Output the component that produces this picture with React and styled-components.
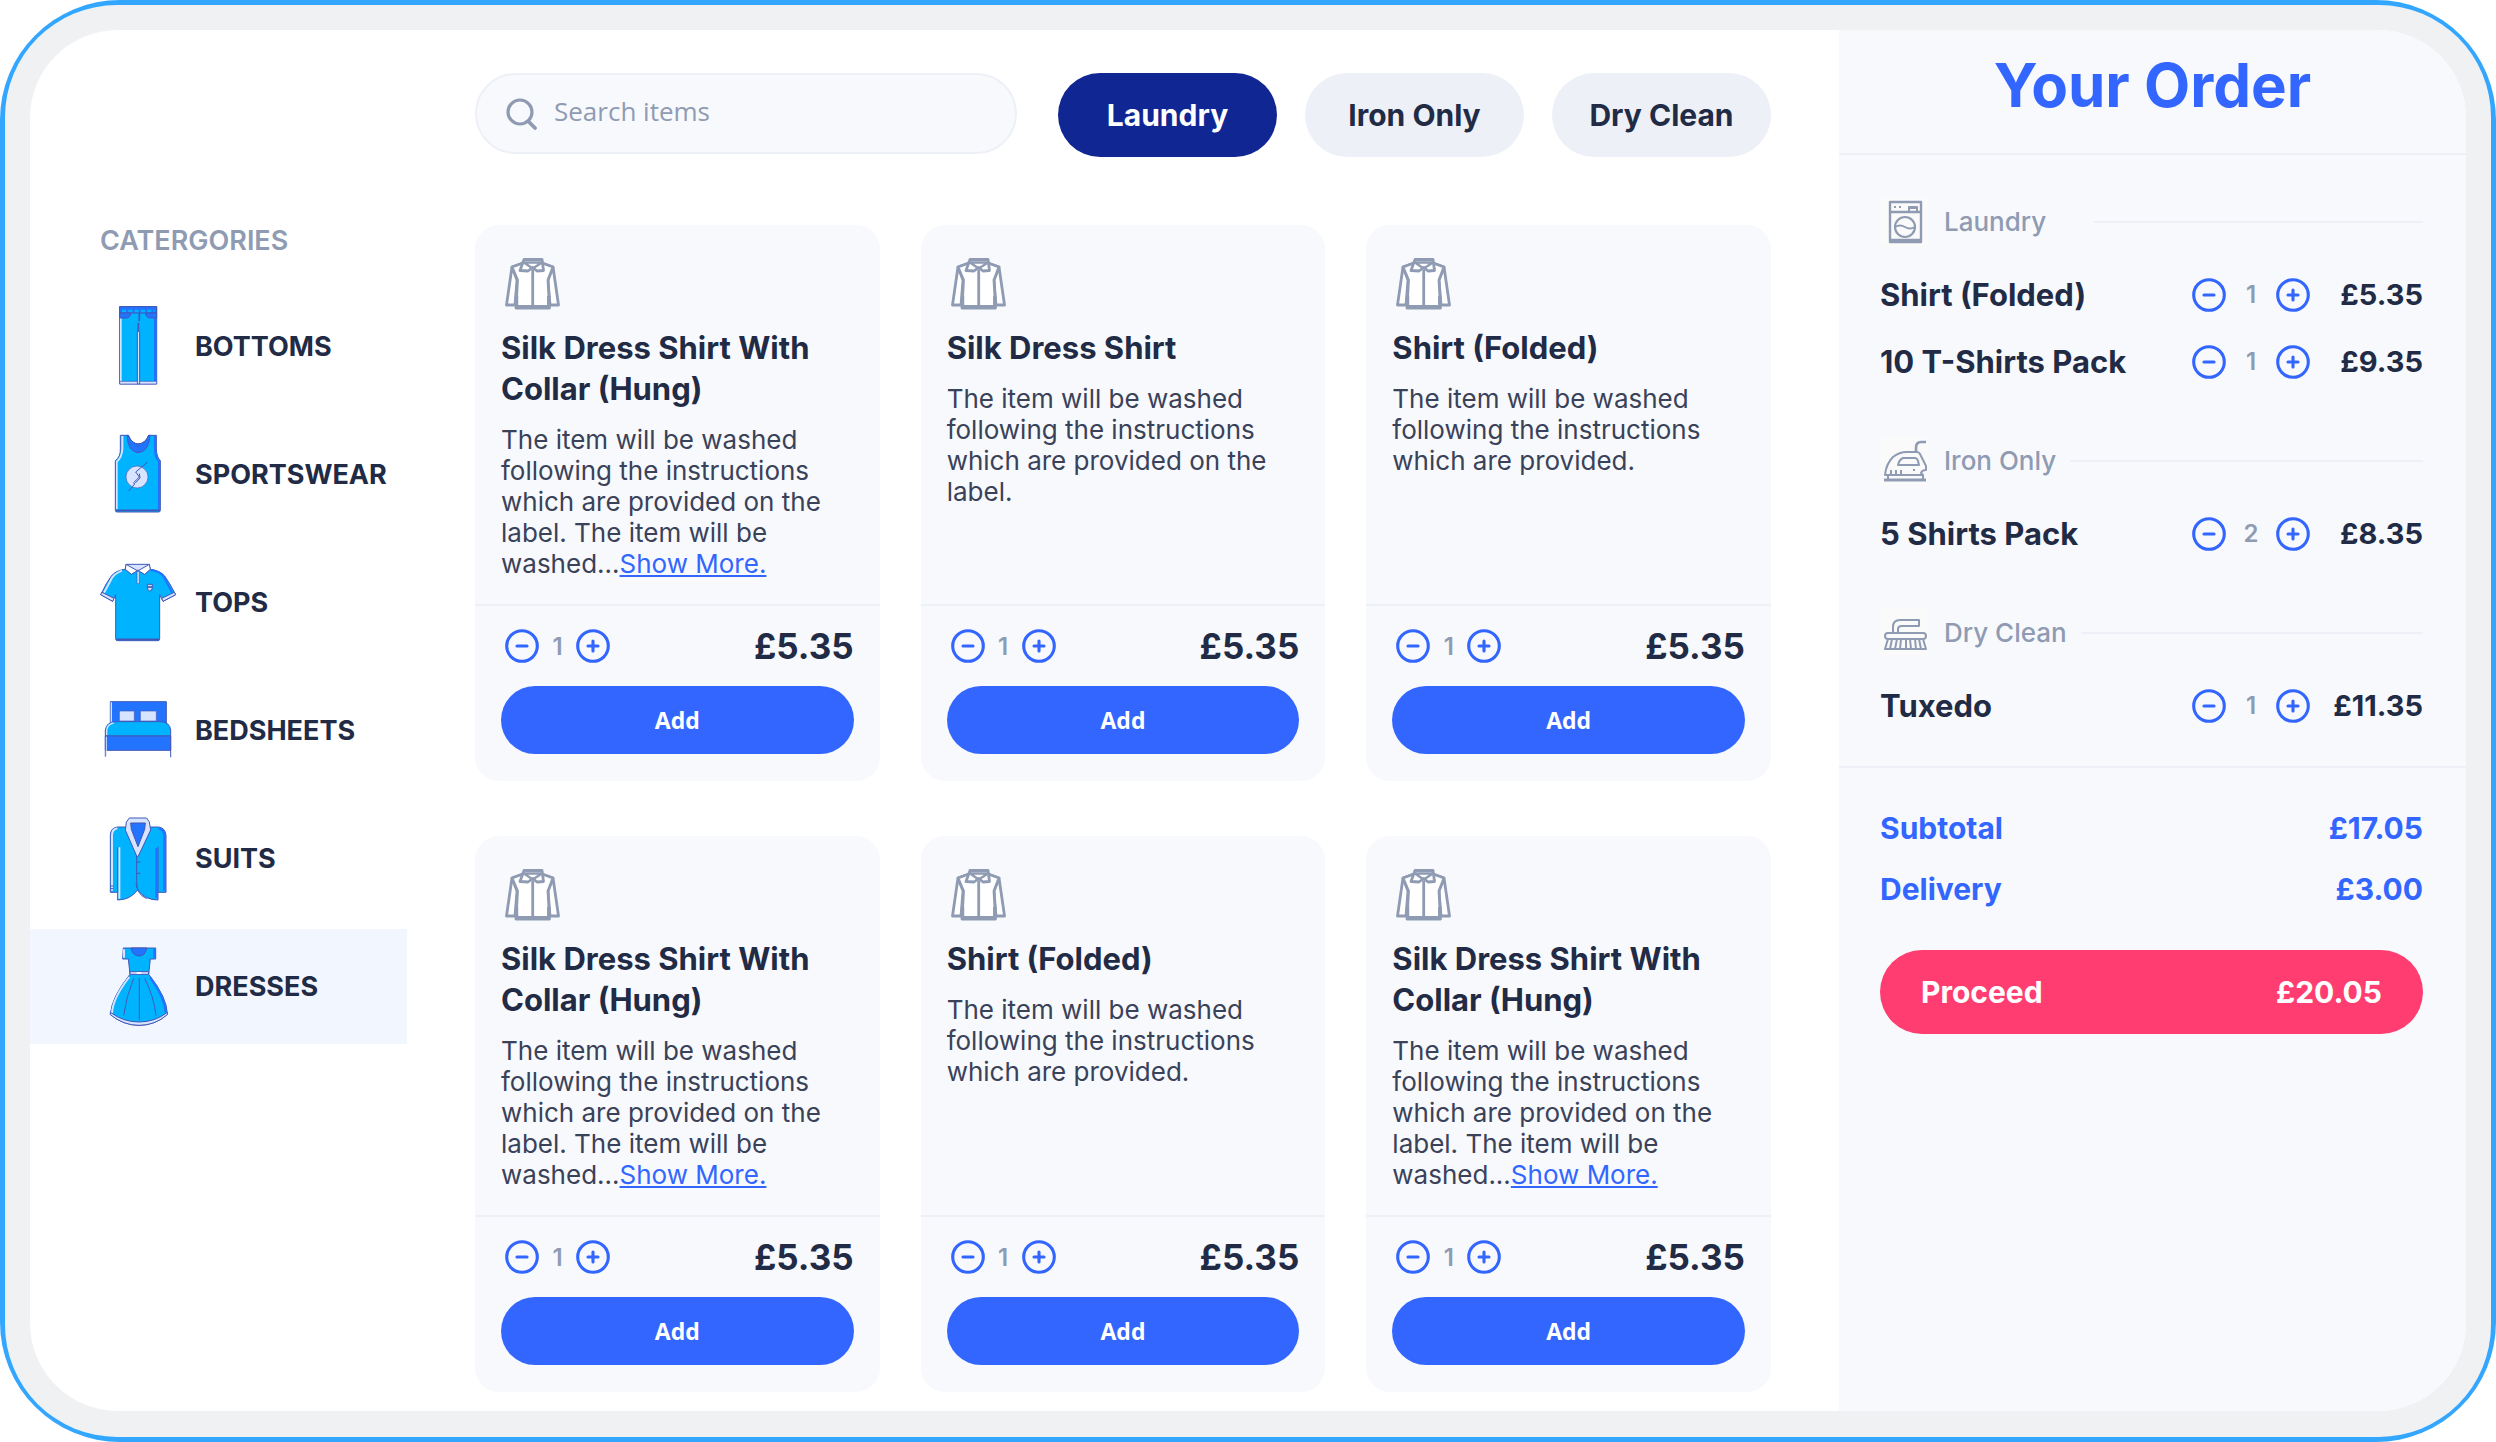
// IMPORTS
  // - Modules
    import { useState } from 'react'
    import styled, { createGlobalStyle } from 'styled-components'
//


// BRANDING
  const colors = {
    frame: '#33a6ff',
    bezel: '#f0f1f3',
    light: '#ffffff',
    panel: '#f7f9fc',
    line: '#edf1f7',
    hint: '#8f9bb3',
    dark: '#222b45',
    text: '#3a4259',
    primary: '#3366ff',
    primaryDark: '#102693',
    pill: '#edf0f7',
    active: '#f2f6ff',
    danger: '#ff3d71',
  }

  const fonts = {
    main: `Inter, "Liberation Sans", sans-serif`,
    controls: `"Open Sans", "Noto Sans", sans-serif`,
  }
//


// DATA
  const categories = ['Bottoms', 'Sportswear', 'Tops', 'Bedsheets', 'Suits', 'Dresses']

  const services = ['Laundry', 'Iron Only', 'Dry Clean']

  const longText = 'The item will be washed following the instructions which are provided on the label. The item will be washed...'
  const mediumText = 'The item will be washed following the instructions which are provided on the label.'
  const shortText = 'The item will be washed following the instructions which are provided.'

  const products = [
    { id: 1, name: 'Silk Dress Shirt With Collar (Hung)', text: longText, more: true, price: '£5.35' },
    { id: 2, name: 'Silk Dress Shirt', text: mediumText, price: '£5.35' },
    { id: 3, name: 'Shirt (Folded)', text: shortText, price: '£5.35' },
    { id: 4, name: 'Silk Dress Shirt With Collar (Hung)', text: longText, more: true, price: '£5.35' },
    { id: 5, name: 'Shirt (Folded)', text: shortText, price: '£5.35' },
    { id: 6, name: 'Silk Dress Shirt With Collar (Hung)', text: longText, more: true, price: '£5.35' },
  ]

  const order = [
    { service: 'Laundry', lineGap: '48px', items: [
      { name: 'Shirt (Folded)', qty: 1, price: '£5.35' },
      { name: '10 T-Shirts Pack', qty: 1, price: '£9.35' },
    ]},
    { service: 'Iron Only', items: [
      { name: '5 Shirts Pack', qty: 2, price: '£8.35' },
    ]},
    { service: 'Dry Clean', items: [
      { name: 'Tuxedo', qty: 1, price: '£11.35' },
    ]},
  ]
//


// STYLES
  const GlobalStyle = createGlobalStyle`
    *, *::before, *::after{
      box-sizing: border-box;
    }

    body{
      margin: 0;
      background: ${colors.light};
      color: ${colors.dark};
      font-family: ${fonts.main};
    }

    h1, h2, h3, p, ul{
      margin: 0;
      padding: 0;
    }

    ul{
      list-style: none;
    }

    svg{
      display: block;
      flex-shrink: 0;
    }

    button{
      padding: 0;
      border: none;
      font-family: inherit;
      cursor: pointer;
    }
  `

  // - Frame
  const Frame = styled.div`
    display: flex;
    min-height: 100vh;
    padding: 5px;
    background: ${colors.frame};
    border-radius: 120px;
  `
  const Bezel = styled.div`
    display: flex;
    flex: 1;
    min-width: 0;
    padding: 25px 25px 26px;
    background: ${colors.bezel};
    border-radius: 112px;
  `
  const Screen = styled.div`
    display: grid;
    grid-template-columns: 377px minmax(0, 1fr) 627px;
    flex: 1;
    min-width: 0;
    overflow: hidden;
    background: ${colors.light};
    border-radius: 88px;
  `

  // - Sidebar
  const Sidebar = styled.nav`
    padding-top: 196px;
  `
  const SidebarTitle = styled.h2`
    margin-bottom: 33px;
    padding-left: 70px;
    color: ${colors.hint};
    font-size: 27px;
    font-weight: 600;
    line-height: 30px;
    text-transform: uppercase;
  `
  const CategoryList = styled.ul`
    display: flex;
    flex-direction: column;
    gap: 13px;
  `
  const CategoryButton = styled.button`
    display: flex;
    align-items: center;
    gap: 19px;
    width: 100%;
    height: 115px;
    padding-left: 70px;
    background: ${props => props.$active ? colors.active : 'transparent'};
    color: ${colors.dark};
    font-size: 27px;
    font-weight: 700;
    text-transform: uppercase;
  `

  // - Catalogue
  const Catalogue = styled.main`
    padding: 43px 68px 18px;
  `
  const Toolbar = styled.div`
    display: flex;
    align-items: flex-start;
    gap: 41px;
    margin-bottom: 68px;
  `
  const SearchBox = styled.label`
    display: flex;
    flex: 1;
    align-items: center;
    gap: 16px;
    min-width: 0;
    height: 81px;
    padding: 0 29px;
    background: ${colors.panel};
    border: 2px solid ${colors.line};
    border-radius: 41px;
  `
  const SearchInput = styled.input`
    flex: 1;
    min-width: 0;
    padding: 0 0 6px;
    background: transparent;
    border: none;
    outline: none;
    color: ${colors.dark};
    font-family: ${fonts.controls};
    font-size: 26px;

    &::placeholder{
      color: ${colors.hint};
      opacity: 1;
    }
  `
  const Pills = styled.div`
    display: flex;
    gap: 28px;
  `
  const Pill = styled.button`
    width: 219px;
    height: 84px;
    background: ${props => props.$active ? colors.primaryDark : colors.pill};
    border-radius: 42px;
    color: ${props => props.$active ? colors.light : colors.dark};
    font-size: 30px;
    font-weight: 700;
  `
  const ProductGrid = styled.div`
    display: grid;
    grid-template-columns: repeat(3, minmax(0, 1fr));
    gap: 55px 41px;
  `
  const Card = styled.article`
    display: flex;
    flex-direction: column;
    background: ${colors.panel};
    border-radius: 24px;
  `
  const CardBody = styled.div`
    flex: 1;
    padding: 33px 26px 25px;
  `
  const CardIcon = styled.div`
    padding-left: 4px;
  `
  const CardTitle = styled.h3`
    margin: 17px 0 15px;
    font-size: 31px;
    font-weight: 700;
    line-height: 41px;
  `
  const CardText = styled.p`
    color: ${colors.text};
    font-size: 26px;
    line-height: 31px;

    a{
      color: ${colors.primary};
      text-decoration: underline;
    }
  `
  const CardFooter = styled.div`
    padding: 23px 26px 27px;
    border-top: 2px solid ${colors.line};
  `
  const CardRow = styled.div`
    display: flex;
    align-items: center;
    justify-content: space-between;
    height: 34px;
    margin-bottom: 23px;
    padding-left: 4px;
  `
  const CardPrice = styled.span`
    font-size: 35px;
    font-weight: 700;
  `
  const AddButton = styled.button`
    width: 100%;
    height: 68px;
    background: ${colors.primary};
    border-radius: 34px;
    color: ${colors.light};
    font-family: ${fonts.controls};
    font-size: 23px;
    font-weight: 700;
  `

  // - Stepper
  const StepperBox = styled.div`
    display: flex;
    align-items: center;
  `
  const RoundButton = styled.button`
    width: 34px;
    height: 34px;
    background: transparent;
    color: ${colors.primary};
  `
  const Quantity = styled.output`
    width: ${props => props.$wide ? '50px' : '37px'};
    color: ${colors.hint};
    font-size: 24px;
    font-weight: 600;
    text-align: center;
  `

  // - Order
  const OrderPanel = styled.aside`
    background: ${colors.panel};
  `
  const OrderHeader = styled.header`
    padding: 17px 0 30px;
    border-bottom: 2px solid ${colors.line};
  `
  const OrderTitle = styled.h1`
    color: ${colors.primary};
    font-size: 60px;
    font-weight: 700;
    line-height: 76px;
    text-align: center;
  `
  const OrderGroups = styled.div`
    display: flex;
    flex-direction: column;
    gap: 42px;
    padding: 43px 43px 27px 41px;
    border-bottom: 2px solid ${colors.line};
  `
  const GroupHeader = styled.div`
    display: flex;
    align-items: center;
    margin-bottom: 15px;
  `
  const GroupName = styled.h2`
    margin: 0 ${props => props.$gap || '14px'} 0 16px;
    color: ${colors.hint};
    font-size: 26px;
    font-weight: 500;
    line-height: 30px;
  `
  const GroupLine = styled.div`
    flex: 1;
    height: 2px;
    background: ${colors.line};
  `
  const OrderRow = styled.li`
    display: flex;
    align-items: center;
    height: 67px;
  `
  const OrderName = styled.span`
    flex: 1;
    font-size: 31px;
    font-weight: 700;
  `
  const OrderPrice = styled.span`
    width: 113px;
    font-size: 29px;
    font-weight: 700;
    text-align: right;
  `
  const Totals = styled.div`
    padding: 30px 43px 0 41px;
  `
  const TotalRow = styled.div`
    display: flex;
    justify-content: space-between;
    color: ${colors.primary};
    font-size: 30px;
    font-weight: 700;
    line-height: 61px;
  `
  const ProceedButton = styled.button`
    display: flex;
    align-items: center;
    justify-content: space-between;
    width: 100%;
    height: 84px;
    margin-top: 30px;
    padding: 0 41px;
    background: ${colors.danger};
    border-radius: 42px;
    color: ${colors.light};
    font-size: 30px;
    font-weight: 700;
  `
//


// ICONS
  const sky = '#00b3ff'
  const royal = '#2274ff'
  const edge = '#4257b8'
  const pale = '#d6e4ff'

  // - Categories
  const categoryDrawings = {
    Bottoms: (
      <svg width="76" height="86" viewBox="62 70 228 258" fill="none" stroke={edge} strokeWidth="3">
        <path d="M121 78H232V310H121Z" fill={sky} />
        <path d="M224 112H232V302H224Z" fill={royal} stroke="none" />
        <path d="M122 112H127V302H122Z" fill={pale} stroke="none" />
        <path d="M121 78H232V97H121Z" fill={royal} />
        <path d="M128 91H226" stroke={sky} strokeWidth="7" strokeDasharray="12 7" />
        <path d="M121 97H154Q154 112 140 112H121ZM232 97H198Q200 112 214 112H232Z" fill={royal} />
        <path d="M180 97V122M177 126V152" strokeWidth="5" strokeDasharray="24 5" />
        <path d="M174 152H181V310H174Z" fill={pale} />
        <path d="M121 302H174V310H121ZM181 302H232V310H181Z" fill={pale} strokeWidth="2" />
      </svg>
    ),
    Sportswear: (
      <svg width="76" height="86" viewBox="60 454 228 258" fill="none" stroke={edge} strokeWidth="3" strokeLinejoin="round">
        <path d="M121 464H145Q155 489 174 490Q196 489 206 464H229V505Q230 530 241 540V689Q241 694 236 694H111Q106 694 106 689V540Q122 528 121 505Z" fill={sky} />
        <path d="M124 466H130V506Q128 532 113 544V686H108V541Q123 530 124 505Z" fill={pale} stroke="none" />
        <path d="M222 466H228V505Q229 531 240 542V688H234V544Q222 530 222 508Z" fill={royal} stroke="none" />
        <path d="M141 464H145Q155 489 174 490Q196 489 206 464H210Q206 515 174 516Q144 514 141 464Z" fill={royal} />
        <path d="M168 495Q174 500 180 495" strokeWidth="2" />
        <circle cx="171" cy="589" r="33" fill={pale} strokeWidth="2" />
        <path d="M203 544L167 574L178 589L161 606L164 610L146 631" />
        <path d="M178 579L180 592L166 607" />
        <path d="M108 689H239" strokeWidth="5" />
      </svg>
    ),
    Tops: (
      <svg width="76" height="86" viewBox="60 838 228 258" fill="none" stroke={edge} strokeWidth="3" strokeLinejoin="round">
        <path d="M138 865Q106 870 94 886Q80 905 62 942L98 962L107 942V1074Q107 1080 112 1080H234Q239 1080 239 1074V942L249 962L287 942Q268 905 254 886Q240 870 208 865Z" fill={sky} />
        <path d="M126 870Q106 878 97 890L72 936" stroke={pale} strokeWidth="6" />
        <path d="M212 868Q242 872 252 889L276 936" stroke={royal} strokeWidth="6" />
        <path d="M62 942L66 935L102 953L98 962ZM287 942L283 935L245 953L249 962Z" fill={pale} />
        <path d="M138 851H208L210 866L194 880L174 868L154 880L136 866Z" fill={pale} />
        <path d="M138 851L172 870L154 881L136 866ZM208 851L175 870L194 881L211 866Z" fill="#ffffff" />
        <path d="M171 872H178V909H171Z" fill={pale} strokeWidth="2" />
        <path d="M202 911H217V922Q216 930 209 931Q203 930 202 922Z" fill={pale} />
        <path d="M203 919H216" strokeWidth="5" />
        <path d="M109 1076H237" strokeWidth="5" />
      </svg>
    ),
    Bedsheets: (
      <svg width="76" height="86" viewBox="59 82 228 258" fill="none" stroke={edge} strokeWidth="3" strokeLinejoin="round">
        <path d="M90 123H258V200H90Z" fill={royal} />
        <path d="M93 125V190" stroke={pale} strokeWidth="4" />
        <path d="M117 151H162V181H117ZM180 151H228V181H180Z" fill={pale} strokeWidth="2" />
        <path d="M75 226V208Q79 184 104 183H242Q268 184 271 208V226Z" fill={sky} />
        <path d="M79 224V208Q82 190 100 187" stroke={pale} strokeWidth="4" />
        <path d="M75 226H271V269H75Z" fill={royal} />
        <path d="M75 226V288M271 226V290" />
        <path d="M78 228V286" stroke={pale} strokeWidth="3" />
      </svg>
    ),
    Suits: (
      <svg width="76" height="86" viewBox="60 466 228 258" fill="none" stroke={edge} strokeWidth="3" strokeLinejoin="round">
        <path d="M136 499H112Q91 502 91 524V695H113V718Q150 718 173 688Q196 718 234 718V695H258V524Q256 502 236 499H212Z" fill={sky} />
        <path d="M112 503Q96 506 96 524V690M118 560V714" stroke={pale} strokeWidth="6" />
        <path d="M236 503Q252 506 253 524V690M229 562V712" stroke={royal} strokeWidth="7" />
        <path d="M113 695V560M234 695V558M91 676H100M91 684H100" />
        <path d="M148 486H200L176 560H171Z" fill={royal} />
        <path d="M148 472H200L208 484L212 508L174 588L170 586L136 508L139 484ZM152 487L154 506L174 558L194 506L196 487Z" fill={pale} fillRule="evenodd" />
        <path d="M170 586V662Q168 700 200 714M173 688L168 668M170 604H181M170 638H181" />
      </svg>
    ),
    Dresses: (
      <svg width="76" height="86" viewBox="60 851 228 258" fill="none" stroke={edge} strokeWidth="3" strokeLinejoin="round">
        <path d="M130 863H227V896H211L206 942Q262 1012 262 1062Q225 1095 177 1095Q130 1095 91 1062Q95 1010 150 942L145 896H128Z" fill={sky} />
        <path d="M148 950Q99 1012 96 1058M132 867V892" stroke={pale} strokeWidth="6" />
        <path d="M211 952Q254 1010 257 1056M223 867V892" stroke={royal} strokeWidth="7" />
        <path d="M153 863H200Q196 887 177 887Q158 887 153 863Z" fill={royal} />
        <path d="M150 934H206V942H150Z" fill={pale} />
        <path d="M170 938H184" stroke="#ffffff" strokeWidth="5" />
        <path d="M91 1056Q130 1085 177 1085Q225 1085 262 1056V1063Q225 1095 177 1095Q130 1095 91 1063Z" fill={pale} />
        <path d="M161 954Q138 1010 131 1066M178 952V1080M194 954Q222 1010 228 1066" />
      </svg>
    ),
  }

  // - Services
  const serviceDrawings = {
    'Laundry': (
      <>
        <path d="M10 4H41V44H10Z" strokeWidth="2.4" />
        <path d="M10 14H41M10 42H41" strokeWidth="2.4" />
        <path d="M14 9H16M19 9H21" />
        <path d="M29 13V9H37V13M29 10H37" />
        <circle cx="25" cy="29" r="10" strokeWidth="2.2" />
        <path d="M15 29Q20 26 25 29T35 29" />
      </>
    ),
    'Iron Only': (
      <>
        <path d="M46 5H41Q36 5 36 11V15" strokeWidth="2.6" />
        <path d="M5 38Q6 27 13 20Q19 15 27 15H37Q39 15 40 17L46 29V33Q42 33 41 36L43 38Z" />
        <path d="M18 28Q19 23 23 21H35Q37 21 38 24L39 28Z" />
        <path d="M11 33V37M16 33V37M21 33V37" strokeWidth="2" />
        <path d="M34 32V34" />
        <path d="M8 38V43M43 38V43" />
        <path d="M4 43H46" strokeWidth="3" />
      </>
    ),
    'Dry Clean': (
      <>
        <path d="M13 24V18Q13 11 20 11H39V17H22Q18 17 18 20V24" />
        <rect x="5" y="24" width="41" height="6" rx="3" />
        <path d="M8 30L5 40H46L43 30" />
        <path d="M12 30L10 40M17 30L15 40M21 30L20 40M26 30V40M30 30L31 40M35 30L36 40M39 30L41 40" />
      </>
    ),
  }

  const ServiceSvg = styled.svg`
    background: #fafafa;
    color: ${colors.hint};
  `

  function ServiceIcon({ name }) {
    return (
      <ServiceSvg width="48" height="48" viewBox="0 0 48 48" fill="none" stroke="currentColor" strokeWidth="2" strokeLinejoin="round" aria-hidden="true">
        {serviceDrawings[name]}
      </ServiceSvg>
    )
  }

  // - Generic
  function ShirtIcon() {
    return (
      <svg width="55" height="52" viewBox="0 0 55 52" fill="none" stroke={colors.hint} strokeWidth="2.8" strokeLinejoin="round" aria-hidden="true">
        <path d="M18 5L7 9L1.500 47H10L12 22L7 9" fill="#ffffff" />
        <path d="M37 5L48 9L53.500 47H45L43 22L48 9" fill="#ffffff" />
        <path d="M18 5L7 9L12.500 22L11 50H44.500L43 22L48 9L37 5Z" fill="#ffffff" />
        <path d="M11 49H44.500" strokeWidth="4" />
        <path d="M27.700 12V49" />
        <path d="M11.500 38V48M43.800 38V48" strokeWidth="3.5" />
        <path d="M19 1.500H37L38.500 12.500L32 13L27.700 9.500L23 13L15 12.500Z" fill="#ffffff" />
        <path d="M19 4.500H37M19 4.500L27.700 10.500L37 4.500" strokeWidth="2.4" />
      </svg>
    )
  }

  function SearchIcon() {
    return (
      <svg width="32" height="32" viewBox="0 0 32 32" fill="none" stroke={colors.hint} strokeWidth="3.2" strokeLinecap="round" aria-hidden="true">
        <circle cx="14" cy="14" r="12" />
        <path d="M22.500 23.500L29 30" strokeWidth="3.8" />
      </svg>
    )
  }

  function RoundIcon({ plus }) {
    return (
      <svg width="34" height="34" viewBox="0 0 34 34" fill="none" stroke="currentColor" strokeWidth="3.1" strokeLinecap="round" aria-hidden="true">
        <circle cx="17" cy="17" r="15.300" />
        <path d={plus ? 'M12 17H22M17 12V22' : 'M12 17H22'} />
      </svg>
    )
  }
//


// COMPONENTS
function Stepper({ initial, label, wide }) {
  const [qty, setQty] = useState(initial)

  return (
    <StepperBox>
      <RoundButton type="button" aria-label={`Remove one ${label}`} onClick={() => setQty(Math.max(0, qty - 1))}>
        <RoundIcon />
      </RoundButton>
      <Quantity $wide={wide}>{qty}</Quantity>
      <RoundButton type="button" aria-label={`Add one ${label}`} onClick={() => setQty(qty + 1)}>
        <RoundIcon plus />
      </RoundButton>
    </StepperBox>
  )
}

function ProductCard({ product }) {
  return (
    <Card>
      <CardBody>
        <CardIcon><ShirtIcon /></CardIcon>
        <CardTitle>{product.name}</CardTitle>
        <CardText>
          {product.text}
          {product.more && <a href="#more">Show More.</a>}
        </CardText>
      </CardBody>

      <CardFooter>
        <CardRow>
          <Stepper initial={1} label={product.name} />
          <CardPrice>{product.price}</CardPrice>
        </CardRow>
        <AddButton type="button">Add</AddButton>
      </CardFooter>
    </Card>
  )
}

function Order() {
  return (
    <OrderPanel>
      <OrderHeader>
        <OrderTitle>Your Order</OrderTitle>
      </OrderHeader>

      <OrderGroups>
        {order.map(group => (
          <section key={group.service}>
            <GroupHeader>
              <ServiceIcon name={group.service} />
              <GroupName $gap={group.lineGap}>{group.service}</GroupName>
              <GroupLine />
            </GroupHeader>
            <ul>
              {group.items.map(item => (
                <OrderRow key={item.name}>
                  <OrderName>{item.name}</OrderName>
                  <Stepper initial={item.qty} label={item.name} wide />
                  <OrderPrice>{item.price}</OrderPrice>
                </OrderRow>
              ))}
            </ul>
          </section>
        ))}
      </OrderGroups>

      <Totals>
        <TotalRow><span>Subtotal</span><span>£17.05</span></TotalRow>
        <TotalRow><span>Delivery</span><span>£3.00</span></TotalRow>
        <ProceedButton type="button">
          <span>Proceed</span>
          <span>£20.05</span>
        </ProceedButton>
      </Totals>
    </OrderPanel>
  )
}
//


// MAIN COMPONENT
export default function App() {
  const [category, setCategory] = useState('Dresses')
  const [service, setService] = useState('Laundry')

  return (
    <>
      <GlobalStyle />

      <Frame>
        <Bezel>
          <Screen>
            <Sidebar>
              <SidebarTitle>Catergories</SidebarTitle>
              <CategoryList>
                {categories.map(name => (
                  <li key={name}>
                    <CategoryButton type="button" $active={name === category} onClick={() => setCategory(name)}>
                      {categoryDrawings[name]}
                      {name}
                    </CategoryButton>
                  </li>
                ))}
              </CategoryList>
            </Sidebar>

            <Catalogue>
              <Toolbar>
                <SearchBox>
                  <SearchIcon />
                  <SearchInput type="text" placeholder="Search items" aria-label="Search items" />
                </SearchBox>
                <Pills>
                  {services.map(name => (
                    <Pill key={name} type="button" $active={name === service} onClick={() => setService(name)}>
                      {name}
                    </Pill>
                  ))}
                </Pills>
              </Toolbar>

              <ProductGrid>
                {products.map(product => <ProductCard key={product.id} product={product} />)}
              </ProductGrid>
            </Catalogue>

            <Order />
          </Screen>
        </Bezel>
      </Frame>
    </>
  )
}
//
